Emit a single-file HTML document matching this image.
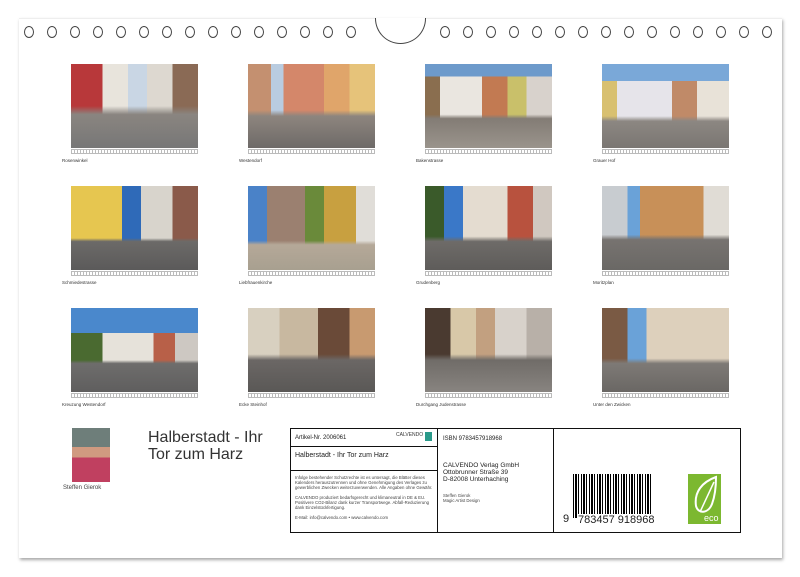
<!DOCTYPE html>
<html><head><meta charset="utf-8"><style>
*{margin:0;padding:0;box-sizing:border-box}
body{width:800px;height:577px;background:#fff;position:relative;overflow:hidden;font-family:"Liberation Sans",sans-serif;color:#222}
.page{position:absolute;left:19px;top:18px;width:763px;height:540px;background:#fff;box-shadow:1px 2px 3px rgba(0,0,0,.35);border-top:1px solid #eee}
.hole{position:absolute;top:26px;width:10px;height:12px;border:1px solid #444;border-radius:50%}
.notch{position:absolute;left:375px;top:18px;width:51px;height:26px;border:1px solid #444;border-top:none;border-radius:0 0 26px 26px;background:#fff}
.ph{position:absolute;width:127px;height:84px}
.sc{position:absolute;width:127px;height:5px;border:1px solid #bbb;background:repeating-linear-gradient(90deg,#fff 0 2px,#bbb 2px 3px)}
.lb{position:absolute;font-size:4.5px;color:#333}
.t{position:absolute;font-size:6px}
</style></head><body>
<div class="page"></div>
<div class="notch"></div>
<div class="hole" style="left:24px"></div><div class="hole" style="left:47px"></div><div class="hole" style="left:70px"></div><div class="hole" style="left:93px"></div><div class="hole" style="left:116px"></div><div class="hole" style="left:139px"></div><div class="hole" style="left:162px"></div><div class="hole" style="left:185px"></div><div class="hole" style="left:208px"></div><div class="hole" style="left:231px"></div><div class="hole" style="left:254px"></div><div class="hole" style="left:277px"></div><div class="hole" style="left:300px"></div><div class="hole" style="left:323px"></div><div class="hole" style="left:346px"></div>
<div class="hole" style="left:440px"></div><div class="hole" style="left:463px"></div><div class="hole" style="left:486px"></div><div class="hole" style="left:509px"></div><div class="hole" style="left:532px"></div><div class="hole" style="left:555px"></div><div class="hole" style="left:578px"></div><div class="hole" style="left:601px"></div><div class="hole" style="left:624px"></div><div class="hole" style="left:647px"></div><div class="hole" style="left:670px"></div><div class="hole" style="left:693px"></div><div class="hole" style="left:716px"></div><div class="hole" style="left:739px"></div><div class="hole" style="left:762px"></div>

<div class="ph" style="left:71px;top:64px;background:linear-gradient(180deg,transparent 50%,#8a8580 60%,#777 100%),linear-gradient(90deg,#b8383a 0 25%,#e8e4dc 25% 45%,#c9d6e4 45% 60%,#ddd8d0 60% 80%,#8a6a55 80%)"></div>
<div class="ph" style="left:248px;top:64px;background:linear-gradient(180deg,transparent 55%,#8d857e 62%,#6e6a68 100%),linear-gradient(90deg,#c49070 0 18%,#b9cce0 18% 28%,#d4876a 28% 60%,#e0a56a 60% 80%,#e6c37a 80%)"></div>
<div class="ph" style="left:425px;top:64px;background:linear-gradient(180deg,#6d9acb 0 15%,transparent 15% 60%,#837c75 65%,#9a948c 100%),linear-gradient(90deg,#8a6e4f 0 12%,#eae6e0 12% 45%,#c27a52 45% 65%,#c9c06a 65% 80%,#d8d2cc 80%)"></div>
<div class="ph" style="left:602px;top:64px;background:linear-gradient(180deg,#7aa8d8 0 20%,transparent 20% 62%,#8c8782 68%,#7a7672 100%),linear-gradient(90deg,#d8c070 0 12%,#e6e4ea 12% 55%,#c08a68 55% 75%,#e8e2d8 75%)"></div>
<div class="ph" style="left:71px;top:186px;background:linear-gradient(180deg,transparent 62%,#6c6a68 66%,#5b5a5a 100%),linear-gradient(90deg,#e6c650 0 40%,#2f6ab8 40% 55%,#d8d4cc 55% 80%,#8a5a4a 80%)"></div>
<div class="ph" style="left:248px;top:186px;background:linear-gradient(180deg,transparent 65%,#b5a898 70%,#a8a090 100%),linear-gradient(90deg,#4a82c8 0 15%,#9b8070 15% 45%,#6a8a3a 45% 60%,#c8a040 60% 85%,#e0ddd8 85%)"></div>
<div class="ph" style="left:425px;top:186px;background:linear-gradient(180deg,transparent 60%,#6e6b68 66%,#5e5c5a 100%),linear-gradient(90deg,#3a5a2a 0 15%,#3a78c8 15% 30%,#e4dcd0 30% 65%,#b8523e 65% 85%,#d0c8c0 85%)"></div>
<div class="ph" style="left:602px;top:186px;background:linear-gradient(180deg,transparent 58%,#777370 64%,#6a6865 100%),linear-gradient(90deg,#c8ccd0 0 20%,#6aa2d8 20% 30%,#c89058 30% 80%,#e0dcd5 80%)"></div>
<div class="ph" style="left:71px;top:308px;background:linear-gradient(180deg,#4a88cc 0 30%,transparent 30% 62%,#6e6d6c 66%,#5f5e5e 100%),linear-gradient(90deg,#4a6a30 0 25%,#e6e2da 25% 65%,#b86048 65% 82%,#cdc8c2 82%)"></div>
<div class="ph" style="left:248px;top:308px;background:linear-gradient(180deg,transparent 55%,#6b6765 62%,#5a5856 100%),linear-gradient(90deg,#d8d0c0 0 25%,#c8b8a0 25% 55%,#6a4a38 55% 80%,#c89a70 80%)"></div>
<div class="ph" style="left:425px;top:308px;background:linear-gradient(180deg,transparent 55%,#706c68 62%,#888480 100%),linear-gradient(90deg,#4a3a30 0 20%,#d8c8a8 20% 40%,#c2a080 40% 55%,#d8d2cb 55% 80%,#b8b0a8 80%)"></div>
<div class="ph" style="left:602px;top:308px;background:linear-gradient(180deg,transparent 60%,#7e7a76 66%,#6a6764 100%),linear-gradient(90deg,#7a5a44 0 20%,#6aa2d8 20% 35%,#ddd0bc 35% 100%)"></div>

<div class="sc" style="left:71px;top:149px"></div><div class="sc" style="left:248px;top:149px"></div><div class="sc" style="left:425px;top:149px"></div><div class="sc" style="left:602px;top:149px"></div>
<div class="sc" style="left:71px;top:271px"></div><div class="sc" style="left:248px;top:271px"></div><div class="sc" style="left:425px;top:271px"></div><div class="sc" style="left:602px;top:271px"></div>
<div class="sc" style="left:71px;top:393px"></div><div class="sc" style="left:248px;top:393px"></div><div class="sc" style="left:425px;top:393px"></div><div class="sc" style="left:602px;top:393px"></div>

<div class="lb" style="left:62px;top:158px">Rosenwinkel</div><div class="lb" style="left:239px;top:158px">Westendorf</div><div class="lb" style="left:416px;top:158px">Bakenstrasse</div><div class="lb" style="left:593px;top:158px">Grauer Hof</div>
<div class="lb" style="left:62px;top:280px">Schmiedestrasse</div><div class="lb" style="left:239px;top:280px">Liebfrauenkirche</div><div class="lb" style="left:416px;top:280px">Grudenberg</div><div class="lb" style="left:593px;top:280px">Moritzplan</div>
<div class="lb" style="left:62px;top:402px">Kreuzung Westendorf</div><div class="lb" style="left:239px;top:402px">Ecke Steinhof</div><div class="lb" style="left:416px;top:402px">Durchgang Judenstrasse</div><div class="lb" style="left:593px;top:402px">Unter den Zwicken</div>

<div style="position:absolute;left:72px;top:428px;width:38px;height:54px;background:linear-gradient(180deg,#6e7e7a 0 35%,#d09a80 35% 55%,#c04060 55%)"></div>
<div class="t" style="left:63px;top:485px;font-size:6px;color:#444">Steffen Gierok</div>
<div style="position:absolute;left:148px;top:429px;font-size:16px;line-height:17px;color:#333">Halberstadt - Ihr<br>Tor zum Harz</div>

<div style="position:absolute;left:290px;top:428px;width:451px;height:105px;border:1px solid #111"></div>
<div style="position:absolute;left:437px;top:428px;width:1px;height:105px;background:#111"></div>
<div style="position:absolute;left:553px;top:428px;width:1px;height:105px;background:#111"></div>
<div style="position:absolute;left:290px;top:446px;width:147px;height:1px;background:#111"></div>
<div style="position:absolute;left:290px;top:470px;width:147px;height:1px;background:#111"></div>
<div class="t" style="left:295px;top:435px;font-size:6px">Artikel-Nr. 2006061</div>
<div class="t" style="left:396px;top:432px;font-size:5px;color:#333">CALVENDO</div>
<div style="position:absolute;left:425px;top:432px;width:7px;height:9px;background:#2a9a8a"></div>
<div class="t" style="left:295px;top:452px;font-size:7px">Halberstadt - Ihr Tor zum Harz</div>
<div class="t" style="left:295px;top:475px;font-size:4.3px;line-height:5px;width:142px;color:#444">Infolge bestehender Schutzrechte ist es untersagt, die Blätter dieses Kalenders herauszutrennen und ohne Genehmigung des Verlages zu gewerblichen Zwecken weiterzuverwenden. Alle Angaben ohne Gewähr.<br><br>CALVENDO produziert bedarfsgerecht und klimaneutral in DE &amp; EU. Positivere CO2-Bilanz dank kurzer Transportwege. Abfall-Reduzierung dank Einzelstückfertigung.<br><br>E-Mail: info@calvendo.com • www.calvendo.com</div>
<div class="t" style="left:443px;top:436px;font-size:6px">ISBN 9783457918968</div>
<div class="t" style="left:443px;top:462px;font-size:6.5px;line-height:7px">CALVENDO Verlag GmbH<br>Ottobrunner Straße 39<br>D-82008 Unterhaching</div>
<div class="t" style="left:443px;top:493px;font-size:4.3px;line-height:5px;color:#444">Steffen Gierok<br>Magic Artist Design</div>
<div style="position:absolute;left:573px;top:474px;width:80px;height:44px;background:repeating-linear-gradient(90deg,#000 0 1px,#fff 1px 2px,#000 2px 4px,#fff 4px 5px,#000 5px 6px,#fff 6px 8px)"></div>
<div style="position:absolute;left:578px;top:514px;width:82px;height:12px;background:#fff;font-size:11px;line-height:12px">783457 918968</div>
<div class="t" style="left:563px;top:513px;font-size:11px">9</div>
<div style="position:absolute;left:688px;top:474px;width:33px;height:50px;background:#7cb830"></div>
<svg style="position:absolute;left:688px;top:474px" width="33" height="50" viewBox="0 0 33 50"><path d="M28 3 C14 8 6 18 8 32 C10 40 20 40 24 30 C27 22 28 12 28 3 Z" fill="none" stroke="#fff" stroke-width="2"/><path d="M26 8 L12 38" stroke="#fff" stroke-width="1.5"/><text x="16" y="47" fill="#fff" font-size="9" font-family="Liberation Sans">eco</text></svg>
</body></html>
